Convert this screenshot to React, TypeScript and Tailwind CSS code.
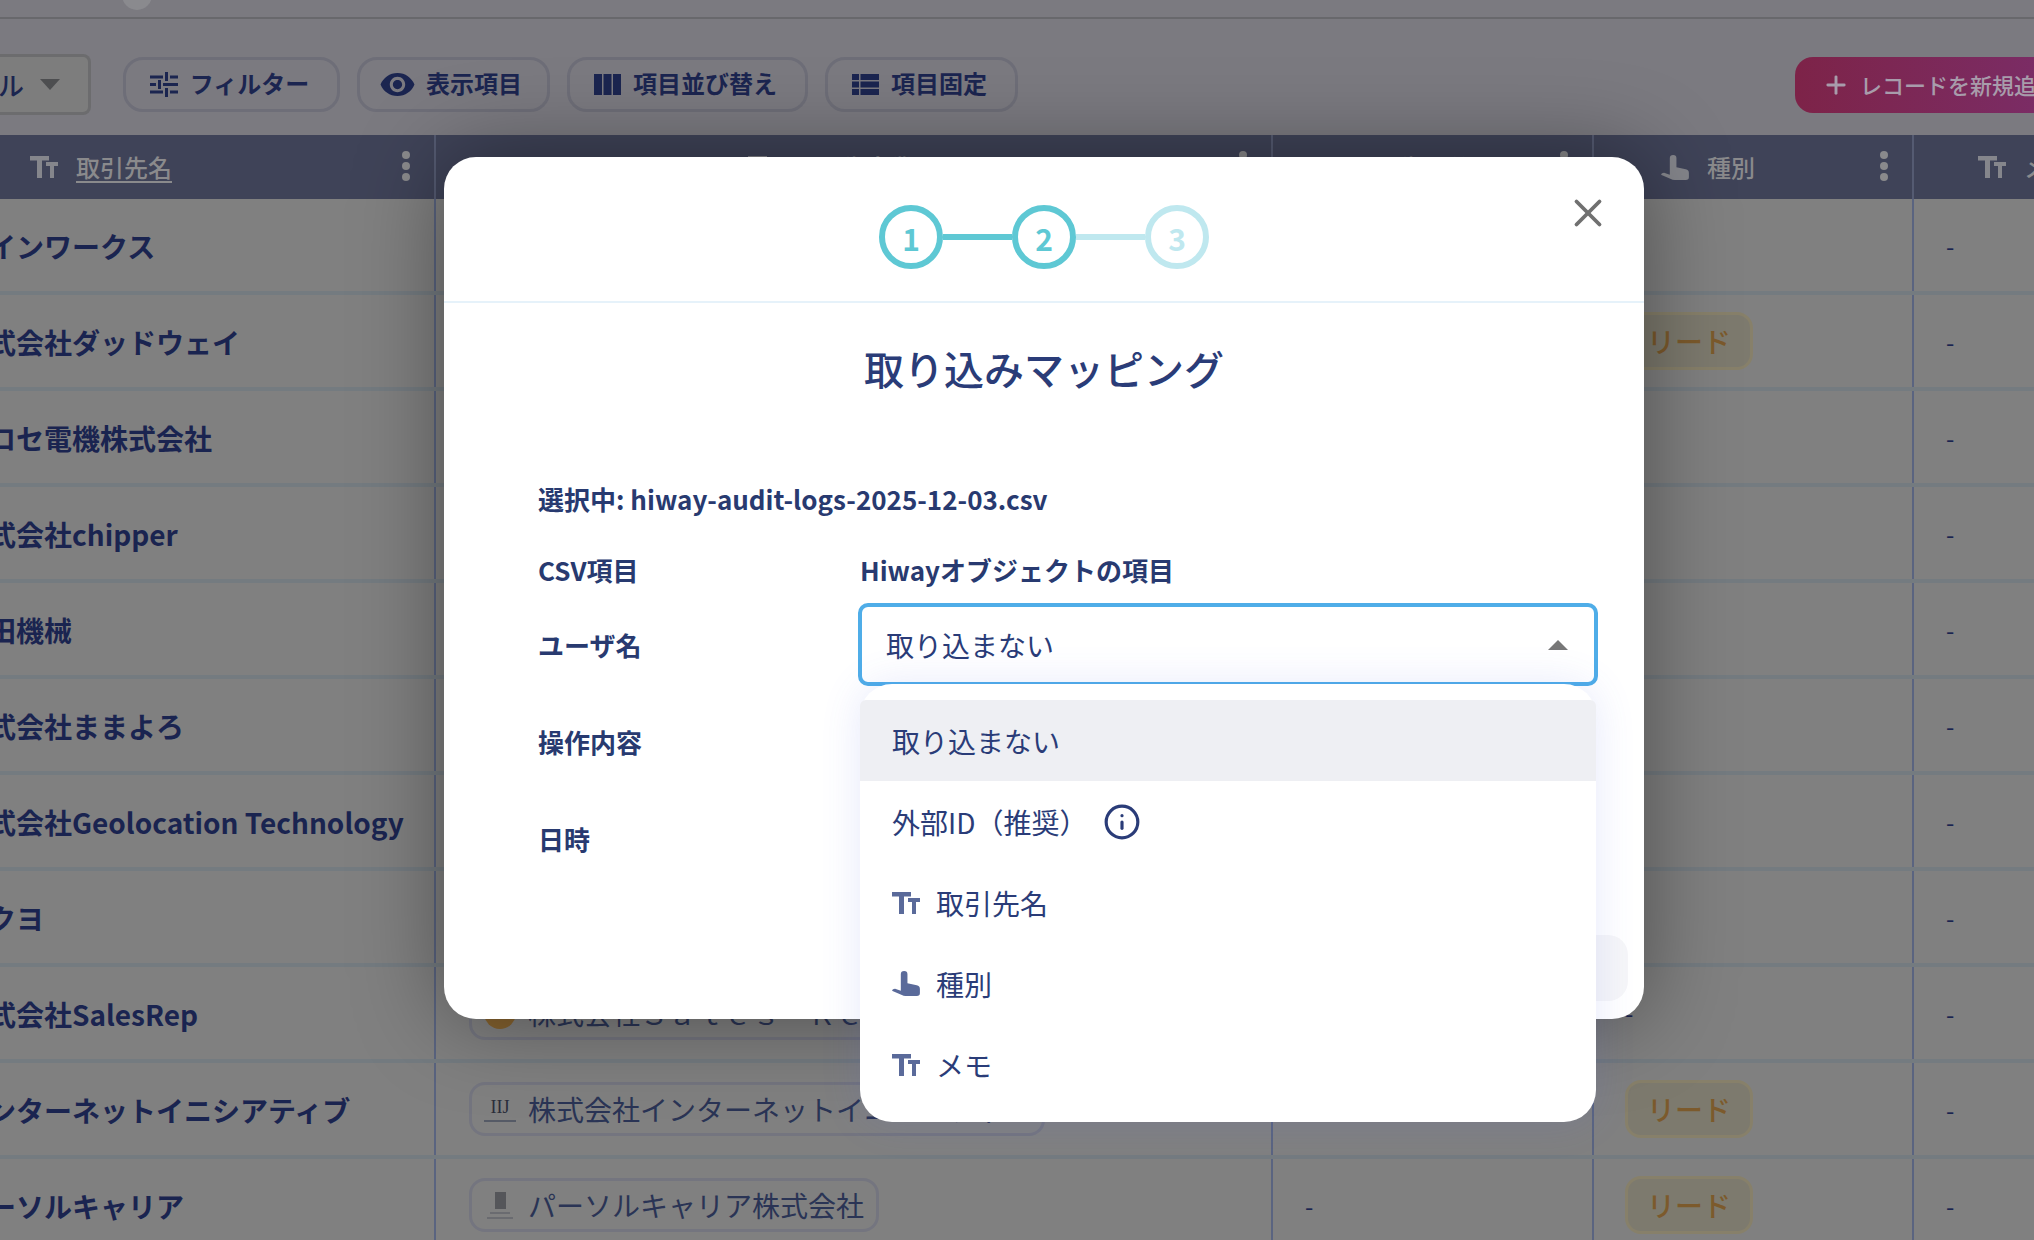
import React from "react";
import { Plus, X, Info } from "lucide-react";
import { MdVisibility } from "react-icons/md";

const font = { fontFamily: '"Noto Sans CJK JP", "Noto Sans", sans-serif' };

const rows = [
  { name: "ラインワークス", company: null, type: false },
  { name: "株式会社ダッドウェイ", company: null, type: true },
  { name: "ヒロセ電機株式会社", company: null, type: false },
  { name: "株式会社chipper", company: null, type: false },
  { name: "山田機械", company: null, type: false },
  { name: "株式会社ままよろ", company: null, type: false },
  { name: "株式会社Geolocation Technology", company: null, type: false },
  { name: "コクヨ", company: null, type: false },
  { name: "株式会社SalesRep", company: "株式会社Ｓａｌｅｓ　Ｒｅｐ", logo: "sales", type: false, dash: true },
  { name: "インターネットイニシアティブ", company: "株式会社インターネットイニシアティブ", logo: "iij", type: true },
  { name: "パーソルキャリア", company: "パーソルキャリア株式会社", logo: "persol", type: true, dash3: true },
];

function TextIcon({ className }: { className: string }) {
  return (
    <svg viewBox="0 0 28 22" className={`w-[28px] h-[22px] shrink-0 ${className}`} fill="currentColor">
      <path d="M0 0h19v4.5h-7V22H7V4.5H0z" />
      <path d="M16 6h12v4h-4v12h-4V10h-4z" />
    </svg>
  );
}

function HandIcon({ className }: { className: string }) {
  return (
    <svg viewBox="0 0 27 24" className={`w-[28px] h-[25px] shrink-0 ${className}`} fill="currentColor">
      <path d="M8.500 3.200a3.200 3.200 0 0 1 6.400 0v8.500l9 2.100q3 .7 3 3.500v4.200q0 2.500-3 2.500H13q-2 0-3.500-1L.5 19.200q-.8-.6 0-1.200 1-1 2.500-1l5.500 2z" />
    </svg>
  );
}

function TuneIcon() {
  return (
    <svg viewBox="0 0 28 25" className="w-[28px] h-[25px] shrink-0" fill="none" stroke="currentColor" strokeWidth="3">
      <path d="M0 5h13M20 5h8M16.500 0v9M0 12.500h6M13 12.500h15M9.500 8v9M0 20h13M20 20h8M16.500 16v9" />
    </svg>
  );
}

function ColumnsIcon() {
  return (
    <svg viewBox="0 0 27 21" className="w-[27px] h-[21px] shrink-0" fill="currentColor">
      <rect width="8" height="21" />
      <rect x="9.500" width="8" height="21" />
      <rect x="19" width="8" height="21" />
    </svg>
  );
}

function PinIcon() {
  return (
    <svg viewBox="0 0 27 21" className="w-[27px] h-[21px] shrink-0" fill="currentColor">
      <rect width="7" height="6" />
      <rect y="7.500" width="7" height="6" />
      <rect y="15" width="7" height="6" />
      <rect x="8.500" width="18.500" height="6" />
      <rect x="8.500" y="7.500" width="18.500" height="6" />
      <rect x="8.500" y="15" width="18.500" height="6" />
    </svg>
  );
}

function Kebab() {
  return (
    <div className="flex flex-col gap-[3px] shrink-0">
      <span className="w-[8px] h-[8px] rounded-full bg-[#8a8a8c]" />
      <span className="w-[8px] h-[8px] rounded-full bg-[#8a8a8c]" />
      <span className="w-[8px] h-[8px] rounded-full bg-[#8a8a8c]" />
    </div>
  );
}

function ToolButton({ icon, label, width }: { icon: React.ReactNode; label: string; width: string }) {
  return (
    <button className={`${width} h-[55px] shrink-0 pr-[4px] flex items-center justify-center gap-[12px] rounded-[20px] border-[3px] border-[#6e6e78] text-[24px] font-bold text-[#1b2550]`}>
      {icon}
      <span className="-mt-[3px]">{label}</span>
    </button>
  );
}

function CompanyLogo({ kind }: { kind?: string }) {
  if (kind === "sales") return <span className="w-[32px] h-[32px] rounded-full bg-[#85622f] shrink-0" />;
  if (kind === "iij") {
    return (
      <span className="w-[32px] shrink-0 flex flex-col items-center">
        <span className="text-[18px] leading-[20px] text-[#2a2d3a]" style={{ fontFamily: '"Liberation Serif", serif' }}>IIJ</span>
        <span className="w-[32px] h-[2px] mt-[3px] bg-[#555a66]" />
      </span>
    );
  }
  return (
    <span className="w-[32px] shrink-0 flex flex-col items-center gap-[3px]">
      <span className="w-[11px] h-[17px] bg-[#55565a]" />
      <span className="w-[20px] h-[2px] bg-[#6a6b70]" />
      <span className="w-[26px] h-[2px] bg-[#6a6b70]" />
    </span>
  );
}

function HeaderCell({ width, pad, icon, label, underline, kebab = true }: { width: string; pad: string; icon: React.ReactNode; label: string; underline?: boolean; kebab?: boolean }) {
  return (
    <div className={`${width} ${pad} shrink-0 h-full flex items-center gap-[18px] pr-[24px] border-r-2 border-[#555b72]`}>
      {icon}
      <span className={`text-[24px] font-medium text-[#8a8a8c] ${underline ? "underline underline-offset-4" : ""}`}>{label}</span>
      {kebab && <span className="ml-auto -mt-[2px]"><Kebab /></span>}
    </div>
  );
}

function Table() {
  const tt = <TextIcon className="text-[#85868c]" />;
  const hand = <HandIcon className="text-[#85868c]" />;
  return (
    <div className="-ml-[100px] w-[2200px]">
      <div className="h-[64px] flex bg-[#3f4358]">
        <HeaderCell width="w-[536px]" pad="pl-[130px]" icon={tt} label="取引先名" underline />
        <HeaderCell width="w-[837px]" pad="pl-[312px]" icon={tt} label="取引先企業" />
        <HeaderCell width="w-[321px]" pad="pl-[32px]" icon={<HandIcon className="mt-[12px] text-[#85868c]" />} label="取引先区分" />
        <HeaderCell width="w-[320px]" pad="pl-[67px]" icon={hand} label="種別" />
        <HeaderCell width="w-[400px]" pad="pl-[64px]" icon={tt} label="メモ" kebab={false} />
      </div>
      {rows.map((r) => (
        <div key={r.name} className="h-[96px] flex border-b-4 border-[#747b80] bg-[#808080]">
          <div className="w-[536px] shrink-0 pl-[60px] pt-[2px] flex items-center border-r-2 border-[#5a6480] text-[28px] font-bold text-[#1a2450] whitespace-nowrap">
            {r.name}
          </div>
          <div className="w-[837px] shrink-0 pl-[33px] flex items-center border-r-2 border-[#5a6480]">
            {r.company && (
              <div className="h-[54px] px-[12px] flex items-center gap-[12px] rounded-[16px] border-[3px] border-[#74757f] text-[28px] text-[#2a3455] whitespace-nowrap">
                <CompanyLogo kind={r.logo} />
                {r.company}
              </div>
            )}
          </div>
          <div className="w-[321px] shrink-0 pl-[32px] pt-[2px] flex items-center border-r-2 border-[#5a6480] text-[24px] text-[#1a2450]">
            {r.dash3 && "-"}
          </div>
          <div className="w-[320px] shrink-0 pl-[31px] flex items-center border-r-2 border-[#5a6480] text-[24px] text-[#1a2450]">
            {r.type && (
              <span className="w-[128px] h-[58px] flex items-center justify-center rounded-[16px] border-[3px] border-[#87806a] bg-[#7d7a6e] text-[28px] font-medium text-[#7c5a2c]">
                リード
              </span>
            )}
            {r.dash && "-"}
          </div>
          <div className="w-[400px] shrink-0 pl-[32px] pt-[2px] flex items-center text-[24px] text-[#1a2450]">-</div>
        </div>
      ))}
    </div>
  );
}

function Step({ n, light }: { n: number; light?: boolean }) {
  return (
    <div className={`w-[64px] h-[64px] rounded-full border-[6px] pt-[2px] flex items-center justify-center text-[30px] font-bold ${light ? "border-[#bfe8ef] text-[#bfe8ef]" : "border-[#5ec8d4] text-[#5ec8d4]"}`}>
      {n}
    </div>
  );
}

function Option({ icon, children, active }: { icon?: React.ReactNode; children: React.ReactNode; active?: boolean }) {
  return (
    <div className={`h-[81px] pl-[32px] flex items-center gap-[16px] text-[28px] font-normal text-[#2a3c78] ${active ? "bg-[#eeeff3] rounded-t-[6px]" : ""}`}>
      {icon}
      {children}
    </div>
  );
}

function SelectDropdown() {
  const tt = <TextIcon className="text-[#5a6a9a]" />;
  return (
    <div className="absolute left-[2px] right-[2px] top-[81px] z-20 pt-[16px] pb-[17px] rounded-[32px] bg-white shadow-[0_0_40px_rgba(80,100,230,0.14)]">
      <Option active>取り込まない</Option>
      <Option>
        <span>外部ID（推奨）</span>
        <Info className="w-[38px] h-[38px] text-[#2a3c78]" strokeWidth={2} />
      </Option>
      <Option icon={tt}>取引先名</Option>
      <Option icon={<HandIcon className="text-[#5a6a9a]" />}>種別</Option>
      <Option icon={tt}>メモ</Option>
    </div>
  );
}

function Modal() {
  return (
    <div className="absolute left-[444px] top-[157px] w-[1200px] h-[862px] rounded-[32px] bg-white shadow-[0_0_90px_rgba(0,0,0,0.4)]">
      <div className="relative h-[146px] pt-[48px] flex justify-center border-b-2 border-[#e6f2fa]">
        <Step n={1} />
        <div className="w-[69px] h-[6px] mt-[29px] bg-[#5ec8d4]" />
        <Step n={2} />
        <div className="w-[69px] h-[6px] mt-[29px] bg-[#bfe8ef]" />
        <Step n={3} light />
        <X className="absolute right-[33px] top-[33px] w-[46px] h-[46px] text-[#707070]" strokeWidth={2} />
      </div>
      <h2 className="mt-[35px] text-center text-[40px] leading-[60px] font-medium text-[#2a3c78]">取り込みマッピング</h2>
      <div className="relative mt-[83px] pl-[94px] pr-[46px] text-[26px] font-bold text-[#283a70]">
        <p className="leading-[36px]">選択中: hiway-audit-logs-2025-12-03.csv</p>
        <div className="mt-[34px] h-[36px] flex items-center">
          <span className="w-[322px]">CSV項目</span>
          <span>Hiwayオブジェクトの項目</span>
        </div>
        <div className="relative mt-[16px] flex flex-col gap-[14px]">
          <div className="h-[83px] flex items-center">
            <span className="w-[320px] shrink-0">ユーザ名</span>
            <div className="relative flex-1 h-full flex items-center justify-between pl-[24px] pr-[26px] rounded-[10px] border-4 border-[#4fade8] text-[28px] font-normal text-[#2a3c78]">
              取り込まない
              <span className="w-0 h-0 border-x-[10px] border-x-transparent border-b-[10px] border-b-[#777777]" />
            </div>
          </div>
          <div className="h-[83px] flex items-center">
            <span className="w-[320px] shrink-0">操作内容</span>
          </div>
          <div className="h-[83px] flex items-center">
            <span className="w-[320px] shrink-0">日時</span>
          </div>
          <div className="absolute left-[320px] right-0 top-0">
            <SelectDropdown />
          </div>
        </div>
      </div>
      <div className="absolute right-[16px] bottom-[18px] w-[300px] h-[66px] rounded-[20px] bg-[#f6f6f8]" />
    </div>
  );
}

export default function App() {
  return (
    <div className="relative w-[2034px] h-[1240px] overflow-hidden bg-[#7b7a80]" style={font}>
      <div className="relative h-[19px] border-b-2 border-[#68686c] overflow-hidden">
        <span className="absolute left-[122px] -top-[20px] w-[30px] h-[30px] rounded-full bg-[#8a8a8e]" />
      </div>
      <div className="h-[116px] pt-[15px] flex items-center overflow-hidden">
        <div className="w-[91px] h-[61px] shrink-0 flex items-center gap-[16px] rounded-r-[8px] border-[3px] border-l-0 border-[#6c6c6e] bg-[#7d7d7d] text-[26px] font-medium text-[#1b2550] overflow-hidden">
          <span className="-ml-[2px] w-[26px] overflow-hidden whitespace-nowrap">ル</span>
          <span className="w-0 h-0 border-x-[10px] border-x-transparent border-t-[11px] border-t-[#4d4e50]" />
        </div>
        <div className="ml-[32px] flex items-center gap-[17px]">
          <ToolButton width="w-[217px]" icon={<TuneIcon />} label="フィルター" />
          <ToolButton width="w-[193px]" icon={<MdVisibility className="w-[37px] h-[37px] -mx-[2px] shrink-0" />} label="表示項目" />
          <ToolButton width="w-[241px]" icon={<ColumnsIcon />} label="項目並び替え" />
          <ToolButton width="w-[193px]" icon={<PinIcon />} label="項目固定" />
        </div>
        <div className="ml-[777px] w-[320px] h-[56px] shrink-0 pl-[27px] flex items-center gap-[10px] rounded-[18px] bg-gradient-to-r from-[#7d2348] to-[#7a2e6e] text-[22px] font-medium text-[#a89cab] whitespace-nowrap">
          <Plus className="w-[28px] h-[28px]" strokeWidth={2.5} />
          レコードを新規追加
        </div>
      </div>
      <Table />
      <Modal />
    </div>
  );
}
